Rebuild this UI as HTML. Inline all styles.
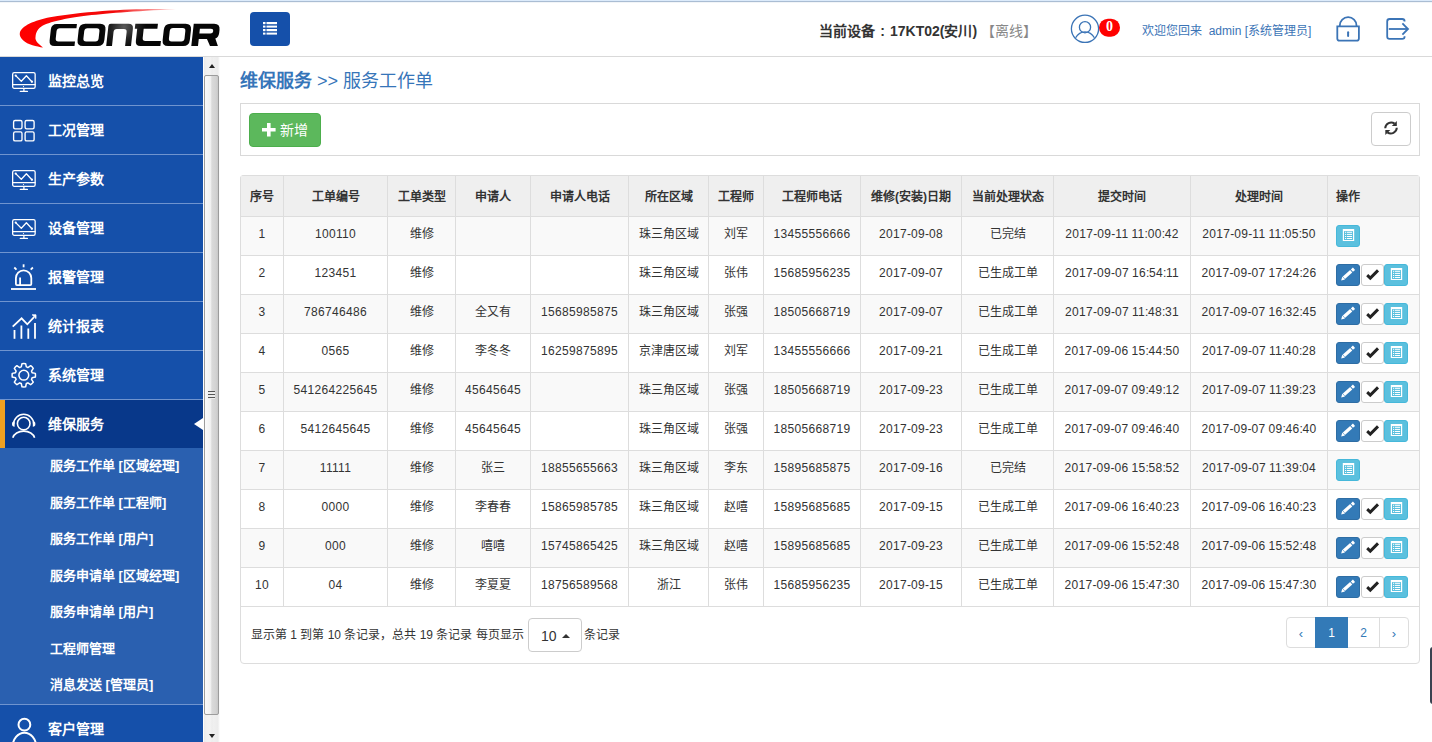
<!DOCTYPE html><html lang="zh-CN"><head><meta charset="utf-8"><style>
*{box-sizing:border-box;margin:0;padding:0}
html,body{width:1432px;height:742px;overflow:hidden;background:#fff;font-family:"Liberation Sans",sans-serif;color:#333}
.abs{position:absolute}
#topline{left:0;top:0;width:1432px;height:3px;background:linear-gradient(#dcebfb 0,#dcebfb 1px,#aabdd3 1px,#aabdd3 2px,#f2f5f8 2px,#f2f5f8 3px)}
#hdrline{left:0;top:56px;width:1432px;height:1px;background:#d9d9d9}
#toggle{left:250px;top:12px;width:40px;height:34px;border-radius:4px;background:#1550aa}
#side{left:0;top:57px;width:203px;height:685px;background:#1550aa;overflow:hidden}
.mi{position:absolute;left:0;width:203px;height:49px;border-bottom:1px solid #6f94cf;color:#fff;font-weight:bold;font-size:14px}
.mi .t{position:absolute;left:48px;top:14px;line-height:20px}
.mi .ic{position:absolute;left:11px;top:10px}
.act{background:#08388a;border-bottom:none;height:48px}
.bar{position:absolute;left:0;top:0;width:5px;height:48px;background:#f0a020}
.tri{position:absolute;right:0;top:18px;width:0;height:0;border-top:6px solid transparent;border-bottom:6px solid transparent;border-right:9px solid #fff}
#sub{position:absolute;left:0;top:391px;width:203px;height:256px;background:#2a60b0}
.si{position:absolute;left:50px;color:#fff;font-size:13px;font-weight:bold;line-height:18.57px}
#sb{left:203px;top:57px;width:17px;height:685px;background:linear-gradient(90deg,#fdfdfd 0,#fdfdfd 1px,#e9e9e9 1px,#f0f0f0 3px,#f2f2f2 8px,#ebebeb 9px,#f0f0f0 10px,#ececec 15px,#f7f7f7 16px,#fff 17px)}
#thumb{left:204px;top:75px;width:15px;height:640px;border:1px solid #9c9c9c;border-radius:2px;background:linear-gradient(90deg,#fafafa 0,#f0f0f0 45%,#dadada 52%,#d2d2d2 85%,#c8c8c8 100%)}
#title{left:240px;top:68px;font-size:18px;line-height:26px;color:#3675b9;white-space:nowrap}
#title b{font-weight:bold}
#toolbar{left:240px;top:103px;width:1180px;height:53px;border:1px solid #d9d9d9}
#addbtn{left:249px;top:113px;width:72px;height:34px;background:#5cb85c;border:1px solid #4cae4c;border-radius:4px;color:#fff;font-size:14px;line-height:32px}
#refbtn{left:1371px;top:112px;width:40px;height:34px;border:1px solid #ccc;border-radius:4px;background:#fff}
#tbox{left:240px;top:175px;width:1180px;height:489px;border:1px solid #ddd;border-radius:4px}
#tw{left:240px;top:175px;width:1180px;height:432px;border-radius:4px 4px 0 0;overflow:hidden}
table{border-collapse:collapse;table-layout:fixed;font-size:12px}
td{letter-spacing:0}
.d{letter-spacing:0.33px}
.c{letter-spacing:-0.33px}
th,td{border:1px solid #ddd;text-align:center;white-space:nowrap;overflow:hidden}
th{height:41px;background:#efefef;font-weight:bold;line-height:24px;padding:1px 0 0 0}
td{height:39px;padding:0 0 4px 0;line-height:17px}
tr.odd td{background:#f9f9f9}
.ops{text-align:left;padding-left:8px}
.bx{display:inline-block;vertical-align:middle;height:22px;border-radius:3px;position:relative;top:2px}
.bp{width:24px;background:#337ab7;border:1px solid #2e6da4}
.bc{width:23px;background:#fff;border:1px solid #ccc;margin-left:1px}
.bi{width:24px;background:#5bc0de;border:1px solid #46b8da;margin-left:0}
#pinfo{left:251px;top:627px;font-size:12px;line-height:17px;white-space:nowrap}
#psel{left:528px;top:618px;width:54px;height:34px;border:1px solid #ccc;border-radius:4px;background:#fff;font-size:14px}
#pag{left:1286px;top:617px;height:31px;display:flex;font-size:12px}
.pg{height:31px;border:1px solid #ddd;margin-left:-1px;color:#337ab7;text-align:center;line-height:31px}
#rtab{left:1430px;top:647px;width:4px;height:57px;background:#3a4250;border-radius:3px 0 0 3px}
</style></head><body>
<div id="topline" class="abs"></div>
<svg class="abs" style="left:0;top:0" width="230" height="56" viewBox="0 0 230 56">
<defs><linearGradient id="lg" gradientUnits="userSpaceOnUse" x1="20" y1="0" x2="178" y2="0"><stop offset="0" stop-color="#ff0000"/><stop offset="0.6" stop-color="#f20a0a"/><stop offset="1" stop-color="#ffe8e8"/></linearGradient>
<radialGradient id="kg" gradientUnits="userSpaceOnUse" cx="122" cy="27" r="22"><stop offset="0" stop-color="#5a5a5a"/><stop offset="0.6" stop-color="#202020"/><stop offset="1" stop-color="#060606"/></radialGradient></defs>
<path d="M176,9.2 C150,8.6 100,9 50,17.2 C35,20 21,26 19.8,32.9 C19,38 25,43 32.5,45.2 C36,46.3 40,47 43,47.5 C37,43 35,40 35.5,37.3 C35.8,31 39,27 45,24.5 C60,18.5 90,13 176,9.2 Z" fill="url(#lg)"/>
<g transform="matrix(1,0,-0.11,1,5.06,0)" fill="url(#kg)" fill-rule="evenodd">
<path d="M74.5,23.9 H54.5 Q49,23.9 49,29.4 V40.4 Q49,45.9 54.5,45.9 H74.5 V41.4 H57.9 Q54.9,41.4 54.9,38.4 V31.2 Q54.9,28.2 57.9,28.2 H74.5 Z"/>
<path d="M82.9,23.8 H97.7 Q103.7,23.8 103.7,29.8 V40 Q103.7,46 97.7,46 H82.9 Q76.9,46 76.9,40 V29.8 Q76.9,23.8 82.9,23.8 Z M85.6,28.2 H94.8 Q97.8,28.2 97.8,31.2 V38.6 Q97.8,41.6 94.8,41.6 H85.6 Q82.6,41.6 82.6,38.6 V31.2 Q82.6,28.2 85.6,28.2 Z"/>
<path d="M106.2,46 V26 Q106.2,23.8 108.4,23.8 H126 Q131,23.8 131,28.8 V46 H125.1 V32 Q125.1,29 122.1,29 H115 Q112,29 112,32 V46 Z"/>
<path d="M132.9,23.8 H155.5 V28.8 H141.8 V38 Q141.8,40.9 144.7,40.9 H160.4 V46 H140.3 Q135.3,46 135.3,41 V28.8 H132.9 Z"/>
<path d="M168,23.7 H183.2 Q189.2,23.7 189.2,29.7 V40.1 Q189.2,46.1 183.2,46.1 H168 Q162,46.1 162,40.1 V29.7 Q162,23.7 168,23.7 Z M171.1,28.1 H180.7 Q183.7,28.1 183.7,31.1 V38.5 Q183.7,41.5 180.7,41.5 H171.1 Q168.1,41.5 168.1,38.5 V31.1 Q168.1,28.1 171.1,28.1 Z"/>
<path d="M191.3,46 V23.8 H211.75 Q217.75,23.8 217.75,29.8 V33 Q217.75,37 214.5,38.6 L217.9,46 H210 L206.2,39 H198 V46 Z M198,28.7 H209 Q211.55,28.7 211.55,31.15 Q211.55,33.6 209,33.6 H198 Z"/>
</g></svg>
<div id="toggle" class="abs"><svg style="position:absolute;left:13px;top:10px" width="14" height="14" viewBox="0 0 14 14"><g fill="#fff"><rect x="0" y="0" width="2.5" height="2.2"/><rect x="3.5" y="0" width="10.5" height="2.2"/><rect x="0" y="3.6" width="2.5" height="2"/><rect x="3.5" y="3.6" width="10.5" height="2"/><rect x="0" y="7" width="2.5" height="2.2"/><rect x="3.5" y="7" width="10.5" height="2.2"/><rect x="0" y="10.6" width="2.5" height="2"/><rect x="3.5" y="10.6" width="10.5" height="2"/></g></svg></div>
<div class="abs" style="left:819px;top:21px;font-size:14px;line-height:20px;font-weight:bold;color:#333;white-space:nowrap">当前设备<span style="display:inline-block;width:15px;text-align:center">:</span>17KT02(安川) <span style="color:#888;font-weight:normal">【离线】</span></div>
<svg class="abs" style="left:1068px;top:12px" width="56" height="34" viewBox="0 0 56 34"><g fill="none" stroke="#3b74b6" stroke-width="1.3"><circle cx="17" cy="16.8" r="13.6"/><circle cx="17" cy="15.2" r="5.6"/><path d="M7.6,25.8 Q11,19.8 17,19.8 Q23,19.8 26.4,25.8"/></g>
<rect x="31" y="6.7" width="21" height="18" rx="9" fill="#f00"/></svg>
<div class="abs" style="left:1099px;top:18px;width:21px;text-align:center;font-family:'Liberation Serif',serif;font-weight:bold;font-size:14px;line-height:18px;color:#fff">0</div>
<div class="abs" style="left:1142px;top:21px;font-size:12px;line-height:20px;color:#3b74b6;white-space:nowrap">欢迎您回来&nbsp; admin [系统管理员]</div>
<svg class="abs" style="left:1334px;top:14px" width="28" height="30" viewBox="0 0 28 30"><g fill="none" stroke="#3b74b6" stroke-width="1.8"><path d="M5.8,12.2 V11.55 A8.35,8.35 0 0 1 22.5,11.55 V12.2"/><path d="M3.3,12.4 H24.9 V24.5 Q24.9,26.7 22.7,26.7 H5.5 Q3.3,26.7 3.3,24.5 Z"/><line x1="14.1" y1="18.3" x2="14.1" y2="22" stroke-width="2" stroke-linecap="round"/></g></svg>
<svg class="abs" style="left:1384px;top:16px" width="28" height="26" viewBox="0 0 28 26"><g fill="none" stroke="#3b74b6" stroke-width="1.8"><path d="M20.6,5.6 V5.4 Q20.6,3 18.2,3 H5.6 Q3.2,3 3.2,5.4 V20.5 Q3.2,22.9 5.6,22.9 H18.2 Q20.6,22.9 20.6,20.5 V20.3"/><line x1="4.8" y1="13" x2="23.6" y2="13"/><polyline points="18.4,7.4 24,13 18.4,18.6"/></g></svg>
<div id="hdrline" class="abs"></div>
<div id="side" class="abs">
<div class="mi" style="top:0px"><span class="ic"><svg width="26" height="26" viewBox="0 0 26 26"><g fill="none" stroke="#fff" stroke-width="1.3" stroke-linejoin="round" stroke-linecap="round"><rect x="1.65" y="5.65" width="22.5" height="15.7" rx="1.6"/><line x1="1.65" y1="17.6" x2="24.15" y2="17.6"/><line x1="12.9" y1="21.4" x2="12.9" y2="24.2"/><line x1="9.3" y1="24.4" x2="16.4" y2="24.4"/><polyline points="4.7,8.6 10.3,14.2 15.4,8.8 20.9,14.7"/></g><circle cx="4.7" cy="8.6" r="1.1" fill="#fff"/><circle cx="20.9" cy="14.7" r="1.1" fill="#fff"/><circle cx="12.5" cy="19.5" r="0.6" fill="#fff"/></svg></span><span class="t">监控总览</span></div>
<div class="mi" style="top:49px"><span class="ic"><svg width="26" height="28" viewBox="0 0 26 28"><g fill="none" stroke="#fff" stroke-width="1.35"><rect x="2.6" y="4.5" width="8.4" height="8.3" rx="1.5"/><rect x="14.1" y="4.5" width="9" height="8.3" rx="1.5"/><rect x="2.6" y="15.9" width="8.4" height="9" rx="1.5"/><rect x="14.1" y="15.9" width="9" height="9" rx="1.5"/></g></svg></span><span class="t">工况管理</span></div>
<div class="mi" style="top:98px"><span class="ic"><svg width="26" height="26" viewBox="0 0 26 26"><g fill="none" stroke="#fff" stroke-width="1.3" stroke-linejoin="round" stroke-linecap="round"><rect x="1.65" y="5.65" width="22.5" height="15.7" rx="1.6"/><line x1="1.65" y1="17.6" x2="24.15" y2="17.6"/><line x1="12.9" y1="21.4" x2="12.9" y2="24.2"/><line x1="9.3" y1="24.4" x2="16.4" y2="24.4"/><polyline points="4.7,8.6 10.3,14.2 15.4,8.8 20.9,14.7"/></g><circle cx="4.7" cy="8.6" r="1.1" fill="#fff"/><circle cx="20.9" cy="14.7" r="1.1" fill="#fff"/><circle cx="12.5" cy="19.5" r="0.6" fill="#fff"/></svg></span><span class="t">生产参数</span></div>
<div class="mi" style="top:147px"><span class="ic"><svg width="26" height="26" viewBox="0 0 26 26"><g fill="none" stroke="#fff" stroke-width="1.3" stroke-linejoin="round" stroke-linecap="round"><rect x="1.65" y="5.65" width="22.5" height="15.7" rx="1.6"/><line x1="1.65" y1="17.6" x2="24.15" y2="17.6"/><line x1="12.9" y1="21.4" x2="12.9" y2="24.2"/><line x1="9.3" y1="24.4" x2="16.4" y2="24.4"/><polyline points="4.7,8.6 10.3,14.2 15.4,8.8 20.9,14.7"/></g><circle cx="4.7" cy="8.6" r="1.1" fill="#fff"/><circle cx="20.9" cy="14.7" r="1.1" fill="#fff"/><circle cx="12.5" cy="19.5" r="0.6" fill="#fff"/></svg></span><span class="t">设备管理</span></div>
<div class="mi" style="top:196px"><span class="ic"><svg width="28" height="28" viewBox="0 0 28 28"><g fill="none" stroke="#fff" stroke-width="1.8" stroke-linecap="butt"><path d="M4.9,21 V15.1 A7.7,7.7 0 0 1 20.3,15.1 V21 Q20.3,22.1 19.2,22.1 H6 Q4.9,22.1 4.9,21 Z"/><path d="M9.1,22.1 V14.5"/><line x1="0" y1="26" x2="25" y2="26"/><line x1="12.6" y1="1.3" x2="12.6" y2="4.3"/><line x1="3.3" y1="4.5" x2="5.5" y2="6.6"/><line x1="21.9" y1="4.5" x2="19.7" y2="6.6"/></g></svg></span><span class="t">报警管理</span></div>
<div class="mi" style="top:245px"><span class="ic"><svg width="28" height="28" viewBox="0 0 28 28"><g fill="none" stroke="#fff" stroke-width="1.8"><line x1="3.5" y1="18" x2="3.5" y2="26.8"/><line x1="10.4" y1="13.5" x2="10.4" y2="26.8"/><line x1="17.3" y1="16.5" x2="17.3" y2="26.8"/><line x1="24" y1="11" x2="24" y2="26.8"/><polyline points="1.7,14.6 10.6,6.3 16.3,12.3 23,5.2" stroke-linejoin="miter"/></g><path d="M21.2,2.8 L25,2.8 L25,6.6 Z" fill="#fff" stroke="#fff" stroke-width="0.8"/></svg></span><span class="t">统计报表</span></div>
<div class="mi" style="top:294px"><span class="ic"><svg width="28" height="28" viewBox="0 0 28 28"><g fill="none" stroke="#fff" stroke-width="1.5" stroke-linejoin="round"><path d="M10.26,5.88 L10.97,2.64 A11.70,11.70 0 0 1 14.63,2.64 L15.34,5.88 A8.70,8.70 0 0 1 16.88,6.52 L19.68,4.73 A11.70,11.70 0 0 1 22.27,7.32 L20.48,10.12 A8.70,8.70 0 0 1 21.12,11.66 L24.36,12.37 A11.70,11.70 0 0 1 24.36,16.03 L21.12,16.74 A8.70,8.70 0 0 1 20.48,18.28 L22.27,21.08 A11.70,11.70 0 0 1 19.68,23.67 L16.88,21.88 A8.70,8.70 0 0 1 15.34,22.52 L14.63,25.76 A11.70,11.70 0 0 1 10.97,25.76 L10.26,22.52 A8.70,8.70 0 0 1 8.72,21.88 L5.92,23.67 A11.70,11.70 0 0 1 3.33,21.08 L5.12,18.28 A8.70,8.70 0 0 1 4.48,16.74 L1.24,16.03 A11.70,11.70 0 0 1 1.24,12.37 L4.48,11.66 A8.70,8.70 0 0 1 5.12,10.12 L3.33,7.32 A11.70,11.70 0 0 1 5.92,4.73 L8.72,6.52 A8.70,8.70 0 0 1 10.26,5.88 Z"/><circle cx="12.8" cy="14.2" r="4.9"/></g></svg></span><span class="t">系统管理</span></div>
<div class="mi act" style="top:343px"><div class="bar"></div><span class="ic" style="top:12px"><svg width="28" height="28" viewBox="0 0 28 28"><g fill="none" stroke="#fff" stroke-width="1.6"><circle cx="12.7" cy="11.6" r="6.3"/><path d="M2.6,12.2 A10.1,9.9 0 0 1 22.8,12.2"/><path d="M1.8,25.8 A11.1,8.2 0 0 1 23.6,25.8"/></g><path d="M1,12 Q1,9.2 3.6,9.3 L3.6,14.8 Q1,14.8 1,12Z" fill="#fff"/><path d="M24.4,12 Q24.4,9.2 21.8,9.3 L21.8,14.8 Q24.4,14.8 24.4,12Z" fill="#fff"/></svg></span><span class="t">维保服务</span><div class="tri"></div></div>
<div id="sub">
<div class="si" style="top:9.00px">服务工作单 [区域经理]</div>
<div class="si" style="top:45.57px">服务工作单 [工程师]</div>
<div class="si" style="top:82.14px">服务工作单 [用户]</div>
<div class="si" style="top:118.71px">服务申请单 [区域经理]</div>
<div class="si" style="top:155.28px">服务申请单 [用户]</div>
<div class="si" style="top:191.85px">工程师管理</div>
<div class="si" style="top:228.42px">消息发送 [管理员]</div>
</div>
<div class="mi" style="top:647px;border-top:1px solid #6f94cf;border-bottom:none"><span class="ic" style="top:10px"><svg width="28" height="30" viewBox="0 0 28 30"><g fill="none" stroke="#fff" stroke-width="2"><circle cx="13.4" cy="9.7" r="5.9"/><path d="M1.6,32 A11.8,14.3 0 0 1 25.2,32"/></g></svg></span><span class="t" style="top:14px">客户管理</span></div>
</div>
<div id="sb" class="abs"></div>
<div class="abs" style="left:209px;top:64px;width:0;height:0;border-left:3.5px solid transparent;border-right:3.5px solid transparent;border-bottom:4px solid #222"></div>
<div id="thumb" class="abs"></div>
<div class="abs" style="left:209px;top:734px;width:0;height:0;border-left:3.5px solid transparent;border-right:3.5px solid transparent;border-top:4px solid #222"></div>
<div class="abs" style="left:208px;top:391px;width:7px;height:8px;background:repeating-linear-gradient(#555 0,#555 1px,#ececec 1px,#ececec 3px)"></div>
<div id="title" class="abs"><b>维保服务</b> &gt;&gt; 服务工作单</div>
<div id="toolbar" class="abs"></div>
<div id="addbtn" class="abs"><svg style="position:absolute;left:12px;top:9px" width="15" height="15" viewBox="0 0 15 15"><path d="M5,0 H8.6 V5 H13.6 V8.6 H8.6 V13.6 H5 V8.6 H0 V5 H5 Z" fill="#fff"/></svg><span style="position:absolute;left:30px;top:0">新增</span></div>
<div id="refbtn" class="abs"><svg style="position:absolute;left:0;top:0" width="38" height="32" viewBox="0 0 38 32"><g transform="translate(12,8)"><g fill="none" stroke="#333" stroke-width="2"><path d="M1.2,7.2 A6,6 0 0 1 10.6,2.6"/><path d="M12.8,6.8 A6,6 0 0 1 3.4,11.4"/></g><path d="M7.8,5.1 H12.8 V0.1 Z" fill="#333"/><path d="M1.3,8.9 H6.3 L1.3,13.9 Z" fill="#333"/></g></svg></div>
<div id="tbox" class="abs"></div>
<div id="tw" class="abs"><table><colgroup><col style="width:43px"><col style="width:104px"><col style="width:68px"><col style="width:75px"><col style="width:98px"><col style="width:80px"><col style="width:55px"><col style="width:97px"><col style="width:101px"><col style="width:92px"><col style="width:137px"><col style="width:137px"><col style="width:92px"></colgroup>
<tr><th>序号</th><th>工单编号</th><th>工单类型</th><th>申请人</th><th>申请人电话</th><th>所在区域</th><th>工程师</th><th>工程师电话</th><th>维修(安装)日期</th><th>当前处理状态</th><th>提交时间</th><th>处理时间</th><th class="ops">操作</th></tr>
<tr class="odd"><td><span class="d">1</span></td><td><span class="d">100110</span></td><td>维修</td><td></td><td></td><td>珠三角区域</td><td>刘军</td><td><span class="d">13455556666</span></td><td><span class="d">2017</span>-<span class="d">09</span>-<span class="d">08</span></td><td>已完结</td><td><span class="d">2017</span>-<span class="d">09</span>-<span class="d">11</span><span class="c"> </span><span class="d">11</span><span class="c">:</span><span class="d">00</span><span class="c">:</span><span class="d">42</span></td><td><span class="d">2017</span>-<span class="d">09</span>-<span class="d">11</span><span class="c"> </span><span class="d">11</span><span class="c">:</span><span class="d">05</span><span class="c">:</span><span class="d">50</span></td><td class="ops"><span class="bx bi"><svg style="position:absolute;left:0;top:0" width="22" height="20" viewBox="0 0 22 20"><rect x="5.8" y="3" width="11.4" height="12" fill="#fff"/><rect x="7" y="5.1" width="9" height="8.9" fill="#5bc0de"/><g fill="#fff"><rect x="8" y="5.8" width="1.2" height="1"/><rect x="10" y="5.8" width="5.1" height="1"/><rect x="8" y="7.9" width="1.2" height="1"/><rect x="10" y="7.9" width="5.1" height="1"/><rect x="8" y="10" width="1.2" height="1"/><rect x="10" y="10" width="5.1" height="1"/><rect x="8" y="12" width="1.2" height="1"/><rect x="10" y="12" width="5.1" height="1"/></g></svg></span></td></tr>
<tr><td><span class="d">2</span></td><td><span class="d">123451</span></td><td>维修</td><td></td><td></td><td>珠三角区域</td><td>张伟</td><td><span class="d">15685956235</span></td><td><span class="d">2017</span>-<span class="d">09</span>-<span class="d">07</span></td><td>已生成工单</td><td><span class="d">2017</span>-<span class="d">09</span>-<span class="d">07</span><span class="c"> </span><span class="d">16</span><span class="c">:</span><span class="d">54</span><span class="c">:</span><span class="d">11</span></td><td><span class="d">2017</span>-<span class="d">09</span>-<span class="d">07</span><span class="c"> </span><span class="d">17</span><span class="c">:</span><span class="d">24</span><span class="c">:</span><span class="d">26</span></td><td class="ops"><span class="bx bp"><svg style="position:absolute;left:0;top:0" width="22" height="20" viewBox="0 0 22 20"><g stroke="#fff" stroke-width="3.2" fill="none"><line x1="6.9" y1="12.7" x2="14.2" y2="6.2"/><line x1="14.9" y1="5.6" x2="17" y2="3.7"/></g><path d="M5.3,11.4 L8,14.4 L4.2,15.4 Z" fill="#fff"/></svg></span><span class="bx bc"><svg style="position:absolute;left:0;top:0" width="21" height="20" viewBox="0 0 21 20"><polyline points="5.2,10.1 8.3,13.1 16,5.4" fill="none" stroke="#222" stroke-width="2.9" stroke-linejoin="miter"/></svg></span><span class="bx bi"><svg style="position:absolute;left:0;top:0" width="22" height="20" viewBox="0 0 22 20"><rect x="5.8" y="3" width="11.4" height="12" fill="#fff"/><rect x="7" y="5.1" width="9" height="8.9" fill="#5bc0de"/><g fill="#fff"><rect x="8" y="5.8" width="1.2" height="1"/><rect x="10" y="5.8" width="5.1" height="1"/><rect x="8" y="7.9" width="1.2" height="1"/><rect x="10" y="7.9" width="5.1" height="1"/><rect x="8" y="10" width="1.2" height="1"/><rect x="10" y="10" width="5.1" height="1"/><rect x="8" y="12" width="1.2" height="1"/><rect x="10" y="12" width="5.1" height="1"/></g></svg></span></td></tr>
<tr class="odd"><td><span class="d">3</span></td><td><span class="d">786746486</span></td><td>维修</td><td>全又有</td><td><span class="d">15685985875</span></td><td>珠三角区域</td><td>张强</td><td><span class="d">18505668719</span></td><td><span class="d">2017</span>-<span class="d">09</span>-<span class="d">07</span></td><td>已生成工单</td><td><span class="d">2017</span>-<span class="d">09</span>-<span class="d">07</span><span class="c"> </span><span class="d">11</span><span class="c">:</span><span class="d">48</span><span class="c">:</span><span class="d">31</span></td><td><span class="d">2017</span>-<span class="d">09</span>-<span class="d">07</span><span class="c"> </span><span class="d">16</span><span class="c">:</span><span class="d">32</span><span class="c">:</span><span class="d">45</span></td><td class="ops"><span class="bx bp"><svg style="position:absolute;left:0;top:0" width="22" height="20" viewBox="0 0 22 20"><g stroke="#fff" stroke-width="3.2" fill="none"><line x1="6.9" y1="12.7" x2="14.2" y2="6.2"/><line x1="14.9" y1="5.6" x2="17" y2="3.7"/></g><path d="M5.3,11.4 L8,14.4 L4.2,15.4 Z" fill="#fff"/></svg></span><span class="bx bc"><svg style="position:absolute;left:0;top:0" width="21" height="20" viewBox="0 0 21 20"><polyline points="5.2,10.1 8.3,13.1 16,5.4" fill="none" stroke="#222" stroke-width="2.9" stroke-linejoin="miter"/></svg></span><span class="bx bi"><svg style="position:absolute;left:0;top:0" width="22" height="20" viewBox="0 0 22 20"><rect x="5.8" y="3" width="11.4" height="12" fill="#fff"/><rect x="7" y="5.1" width="9" height="8.9" fill="#5bc0de"/><g fill="#fff"><rect x="8" y="5.8" width="1.2" height="1"/><rect x="10" y="5.8" width="5.1" height="1"/><rect x="8" y="7.9" width="1.2" height="1"/><rect x="10" y="7.9" width="5.1" height="1"/><rect x="8" y="10" width="1.2" height="1"/><rect x="10" y="10" width="5.1" height="1"/><rect x="8" y="12" width="1.2" height="1"/><rect x="10" y="12" width="5.1" height="1"/></g></svg></span></td></tr>
<tr><td><span class="d">4</span></td><td><span class="d">0565</span></td><td>维修</td><td>李冬冬</td><td><span class="d">16259875895</span></td><td>京津唐区域</td><td>刘军</td><td><span class="d">13455556666</span></td><td><span class="d">2017</span>-<span class="d">09</span>-<span class="d">21</span></td><td>已生成工单</td><td><span class="d">2017</span>-<span class="d">09</span>-<span class="d">06</span><span class="c"> </span><span class="d">15</span><span class="c">:</span><span class="d">44</span><span class="c">:</span><span class="d">50</span></td><td><span class="d">2017</span>-<span class="d">09</span>-<span class="d">07</span><span class="c"> </span><span class="d">11</span><span class="c">:</span><span class="d">40</span><span class="c">:</span><span class="d">28</span></td><td class="ops"><span class="bx bp"><svg style="position:absolute;left:0;top:0" width="22" height="20" viewBox="0 0 22 20"><g stroke="#fff" stroke-width="3.2" fill="none"><line x1="6.9" y1="12.7" x2="14.2" y2="6.2"/><line x1="14.9" y1="5.6" x2="17" y2="3.7"/></g><path d="M5.3,11.4 L8,14.4 L4.2,15.4 Z" fill="#fff"/></svg></span><span class="bx bc"><svg style="position:absolute;left:0;top:0" width="21" height="20" viewBox="0 0 21 20"><polyline points="5.2,10.1 8.3,13.1 16,5.4" fill="none" stroke="#222" stroke-width="2.9" stroke-linejoin="miter"/></svg></span><span class="bx bi"><svg style="position:absolute;left:0;top:0" width="22" height="20" viewBox="0 0 22 20"><rect x="5.8" y="3" width="11.4" height="12" fill="#fff"/><rect x="7" y="5.1" width="9" height="8.9" fill="#5bc0de"/><g fill="#fff"><rect x="8" y="5.8" width="1.2" height="1"/><rect x="10" y="5.8" width="5.1" height="1"/><rect x="8" y="7.9" width="1.2" height="1"/><rect x="10" y="7.9" width="5.1" height="1"/><rect x="8" y="10" width="1.2" height="1"/><rect x="10" y="10" width="5.1" height="1"/><rect x="8" y="12" width="1.2" height="1"/><rect x="10" y="12" width="5.1" height="1"/></g></svg></span></td></tr>
<tr class="odd"><td><span class="d">5</span></td><td><span class="d">541264225645</span></td><td>维修</td><td><span class="d">45645645</span></td><td></td><td>珠三角区域</td><td>张强</td><td><span class="d">18505668719</span></td><td><span class="d">2017</span>-<span class="d">09</span>-<span class="d">23</span></td><td>已生成工单</td><td><span class="d">2017</span>-<span class="d">09</span>-<span class="d">07</span><span class="c"> </span><span class="d">09</span><span class="c">:</span><span class="d">49</span><span class="c">:</span><span class="d">12</span></td><td><span class="d">2017</span>-<span class="d">09</span>-<span class="d">07</span><span class="c"> </span><span class="d">11</span><span class="c">:</span><span class="d">39</span><span class="c">:</span><span class="d">23</span></td><td class="ops"><span class="bx bp"><svg style="position:absolute;left:0;top:0" width="22" height="20" viewBox="0 0 22 20"><g stroke="#fff" stroke-width="3.2" fill="none"><line x1="6.9" y1="12.7" x2="14.2" y2="6.2"/><line x1="14.9" y1="5.6" x2="17" y2="3.7"/></g><path d="M5.3,11.4 L8,14.4 L4.2,15.4 Z" fill="#fff"/></svg></span><span class="bx bc"><svg style="position:absolute;left:0;top:0" width="21" height="20" viewBox="0 0 21 20"><polyline points="5.2,10.1 8.3,13.1 16,5.4" fill="none" stroke="#222" stroke-width="2.9" stroke-linejoin="miter"/></svg></span><span class="bx bi"><svg style="position:absolute;left:0;top:0" width="22" height="20" viewBox="0 0 22 20"><rect x="5.8" y="3" width="11.4" height="12" fill="#fff"/><rect x="7" y="5.1" width="9" height="8.9" fill="#5bc0de"/><g fill="#fff"><rect x="8" y="5.8" width="1.2" height="1"/><rect x="10" y="5.8" width="5.1" height="1"/><rect x="8" y="7.9" width="1.2" height="1"/><rect x="10" y="7.9" width="5.1" height="1"/><rect x="8" y="10" width="1.2" height="1"/><rect x="10" y="10" width="5.1" height="1"/><rect x="8" y="12" width="1.2" height="1"/><rect x="10" y="12" width="5.1" height="1"/></g></svg></span></td></tr>
<tr><td><span class="d">6</span></td><td><span class="d">5412645645</span></td><td>维修</td><td><span class="d">45645645</span></td><td></td><td>珠三角区域</td><td>张强</td><td><span class="d">18505668719</span></td><td><span class="d">2017</span>-<span class="d">09</span>-<span class="d">23</span></td><td>已生成工单</td><td><span class="d">2017</span>-<span class="d">09</span>-<span class="d">07</span><span class="c"> </span><span class="d">09</span><span class="c">:</span><span class="d">46</span><span class="c">:</span><span class="d">40</span></td><td><span class="d">2017</span>-<span class="d">09</span>-<span class="d">07</span><span class="c"> </span><span class="d">09</span><span class="c">:</span><span class="d">46</span><span class="c">:</span><span class="d">40</span></td><td class="ops"><span class="bx bp"><svg style="position:absolute;left:0;top:0" width="22" height="20" viewBox="0 0 22 20"><g stroke="#fff" stroke-width="3.2" fill="none"><line x1="6.9" y1="12.7" x2="14.2" y2="6.2"/><line x1="14.9" y1="5.6" x2="17" y2="3.7"/></g><path d="M5.3,11.4 L8,14.4 L4.2,15.4 Z" fill="#fff"/></svg></span><span class="bx bc"><svg style="position:absolute;left:0;top:0" width="21" height="20" viewBox="0 0 21 20"><polyline points="5.2,10.1 8.3,13.1 16,5.4" fill="none" stroke="#222" stroke-width="2.9" stroke-linejoin="miter"/></svg></span><span class="bx bi"><svg style="position:absolute;left:0;top:0" width="22" height="20" viewBox="0 0 22 20"><rect x="5.8" y="3" width="11.4" height="12" fill="#fff"/><rect x="7" y="5.1" width="9" height="8.9" fill="#5bc0de"/><g fill="#fff"><rect x="8" y="5.8" width="1.2" height="1"/><rect x="10" y="5.8" width="5.1" height="1"/><rect x="8" y="7.9" width="1.2" height="1"/><rect x="10" y="7.9" width="5.1" height="1"/><rect x="8" y="10" width="1.2" height="1"/><rect x="10" y="10" width="5.1" height="1"/><rect x="8" y="12" width="1.2" height="1"/><rect x="10" y="12" width="5.1" height="1"/></g></svg></span></td></tr>
<tr class="odd"><td><span class="d">7</span></td><td><span class="d">11111</span></td><td>维修</td><td>张三</td><td><span class="d">18855655663</span></td><td>珠三角区域</td><td>李东</td><td><span class="d">15895685875</span></td><td><span class="d">2017</span>-<span class="d">09</span>-<span class="d">16</span></td><td>已完结</td><td><span class="d">2017</span>-<span class="d">09</span>-<span class="d">06</span><span class="c"> </span><span class="d">15</span><span class="c">:</span><span class="d">58</span><span class="c">:</span><span class="d">52</span></td><td><span class="d">2017</span>-<span class="d">09</span>-<span class="d">07</span><span class="c"> </span><span class="d">11</span><span class="c">:</span><span class="d">39</span><span class="c">:</span><span class="d">04</span></td><td class="ops"><span class="bx bi"><svg style="position:absolute;left:0;top:0" width="22" height="20" viewBox="0 0 22 20"><rect x="5.8" y="3" width="11.4" height="12" fill="#fff"/><rect x="7" y="5.1" width="9" height="8.9" fill="#5bc0de"/><g fill="#fff"><rect x="8" y="5.8" width="1.2" height="1"/><rect x="10" y="5.8" width="5.1" height="1"/><rect x="8" y="7.9" width="1.2" height="1"/><rect x="10" y="7.9" width="5.1" height="1"/><rect x="8" y="10" width="1.2" height="1"/><rect x="10" y="10" width="5.1" height="1"/><rect x="8" y="12" width="1.2" height="1"/><rect x="10" y="12" width="5.1" height="1"/></g></svg></span></td></tr>
<tr><td><span class="d">8</span></td><td><span class="d">0000</span></td><td>维修</td><td>李春春</td><td><span class="d">15865985785</span></td><td>珠三角区域</td><td>赵嘻</td><td><span class="d">15895685685</span></td><td><span class="d">2017</span>-<span class="d">09</span>-<span class="d">15</span></td><td>已生成工单</td><td><span class="d">2017</span>-<span class="d">09</span>-<span class="d">06</span><span class="c"> </span><span class="d">16</span><span class="c">:</span><span class="d">40</span><span class="c">:</span><span class="d">23</span></td><td><span class="d">2017</span>-<span class="d">09</span>-<span class="d">06</span><span class="c"> </span><span class="d">16</span><span class="c">:</span><span class="d">40</span><span class="c">:</span><span class="d">23</span></td><td class="ops"><span class="bx bp"><svg style="position:absolute;left:0;top:0" width="22" height="20" viewBox="0 0 22 20"><g stroke="#fff" stroke-width="3.2" fill="none"><line x1="6.9" y1="12.7" x2="14.2" y2="6.2"/><line x1="14.9" y1="5.6" x2="17" y2="3.7"/></g><path d="M5.3,11.4 L8,14.4 L4.2,15.4 Z" fill="#fff"/></svg></span><span class="bx bc"><svg style="position:absolute;left:0;top:0" width="21" height="20" viewBox="0 0 21 20"><polyline points="5.2,10.1 8.3,13.1 16,5.4" fill="none" stroke="#222" stroke-width="2.9" stroke-linejoin="miter"/></svg></span><span class="bx bi"><svg style="position:absolute;left:0;top:0" width="22" height="20" viewBox="0 0 22 20"><rect x="5.8" y="3" width="11.4" height="12" fill="#fff"/><rect x="7" y="5.1" width="9" height="8.9" fill="#5bc0de"/><g fill="#fff"><rect x="8" y="5.8" width="1.2" height="1"/><rect x="10" y="5.8" width="5.1" height="1"/><rect x="8" y="7.9" width="1.2" height="1"/><rect x="10" y="7.9" width="5.1" height="1"/><rect x="8" y="10" width="1.2" height="1"/><rect x="10" y="10" width="5.1" height="1"/><rect x="8" y="12" width="1.2" height="1"/><rect x="10" y="12" width="5.1" height="1"/></g></svg></span></td></tr>
<tr class="odd"><td><span class="d">9</span></td><td><span class="d">000</span></td><td>维修</td><td>嘻嘻</td><td><span class="d">15745865425</span></td><td>珠三角区域</td><td>赵嘻</td><td><span class="d">15895685685</span></td><td><span class="d">2017</span>-<span class="d">09</span>-<span class="d">23</span></td><td>已生成工单</td><td><span class="d">2017</span>-<span class="d">09</span>-<span class="d">06</span><span class="c"> </span><span class="d">15</span><span class="c">:</span><span class="d">52</span><span class="c">:</span><span class="d">48</span></td><td><span class="d">2017</span>-<span class="d">09</span>-<span class="d">06</span><span class="c"> </span><span class="d">15</span><span class="c">:</span><span class="d">52</span><span class="c">:</span><span class="d">48</span></td><td class="ops"><span class="bx bp"><svg style="position:absolute;left:0;top:0" width="22" height="20" viewBox="0 0 22 20"><g stroke="#fff" stroke-width="3.2" fill="none"><line x1="6.9" y1="12.7" x2="14.2" y2="6.2"/><line x1="14.9" y1="5.6" x2="17" y2="3.7"/></g><path d="M5.3,11.4 L8,14.4 L4.2,15.4 Z" fill="#fff"/></svg></span><span class="bx bc"><svg style="position:absolute;left:0;top:0" width="21" height="20" viewBox="0 0 21 20"><polyline points="5.2,10.1 8.3,13.1 16,5.4" fill="none" stroke="#222" stroke-width="2.9" stroke-linejoin="miter"/></svg></span><span class="bx bi"><svg style="position:absolute;left:0;top:0" width="22" height="20" viewBox="0 0 22 20"><rect x="5.8" y="3" width="11.4" height="12" fill="#fff"/><rect x="7" y="5.1" width="9" height="8.9" fill="#5bc0de"/><g fill="#fff"><rect x="8" y="5.8" width="1.2" height="1"/><rect x="10" y="5.8" width="5.1" height="1"/><rect x="8" y="7.9" width="1.2" height="1"/><rect x="10" y="7.9" width="5.1" height="1"/><rect x="8" y="10" width="1.2" height="1"/><rect x="10" y="10" width="5.1" height="1"/><rect x="8" y="12" width="1.2" height="1"/><rect x="10" y="12" width="5.1" height="1"/></g></svg></span></td></tr>
<tr><td><span class="d">10</span></td><td><span class="d">04</span></td><td>维修</td><td>李夏夏</td><td><span class="d">18756589568</span></td><td>浙江</td><td>张伟</td><td><span class="d">15685956235</span></td><td><span class="d">2017</span>-<span class="d">09</span>-<span class="d">15</span></td><td>已生成工单</td><td><span class="d">2017</span>-<span class="d">09</span>-<span class="d">06</span><span class="c"> </span><span class="d">15</span><span class="c">:</span><span class="d">47</span><span class="c">:</span><span class="d">30</span></td><td><span class="d">2017</span>-<span class="d">09</span>-<span class="d">06</span><span class="c"> </span><span class="d">15</span><span class="c">:</span><span class="d">47</span><span class="c">:</span><span class="d">30</span></td><td class="ops"><span class="bx bp"><svg style="position:absolute;left:0;top:0" width="22" height="20" viewBox="0 0 22 20"><g stroke="#fff" stroke-width="3.2" fill="none"><line x1="6.9" y1="12.7" x2="14.2" y2="6.2"/><line x1="14.9" y1="5.6" x2="17" y2="3.7"/></g><path d="M5.3,11.4 L8,14.4 L4.2,15.4 Z" fill="#fff"/></svg></span><span class="bx bc"><svg style="position:absolute;left:0;top:0" width="21" height="20" viewBox="0 0 21 20"><polyline points="5.2,10.1 8.3,13.1 16,5.4" fill="none" stroke="#222" stroke-width="2.9" stroke-linejoin="miter"/></svg></span><span class="bx bi"><svg style="position:absolute;left:0;top:0" width="22" height="20" viewBox="0 0 22 20"><rect x="5.8" y="3" width="11.4" height="12" fill="#fff"/><rect x="7" y="5.1" width="9" height="8.9" fill="#5bc0de"/><g fill="#fff"><rect x="8" y="5.8" width="1.2" height="1"/><rect x="10" y="5.8" width="5.1" height="1"/><rect x="8" y="7.9" width="1.2" height="1"/><rect x="10" y="7.9" width="5.1" height="1"/><rect x="8" y="10" width="1.2" height="1"/><rect x="10" y="10" width="5.1" height="1"/><rect x="8" y="12" width="1.2" height="1"/><rect x="10" y="12" width="5.1" height="1"/></g></svg></span></td></tr>
</table></div>
<div id="pinfo" class="abs">显示第 1 到第 10 条记录，总共 19 条记录 每页显示</div>
<div id="psel" class="abs"><span style="position:absolute;left:12px;top:8px;line-height:18px">10</span><div style="position:absolute;left:33px;top:15px;width:0;height:0;border-left:4px solid transparent;border-right:4px solid transparent;border-bottom:4px solid #333"></div></div>
<div class="abs" style="left:584px;top:627px;font-size:12px;line-height:17px">条记录</div>
<div id="pag" class="abs"><div class="pg" style="width:30px;margin-left:0;border-radius:4px 0 0 4px;font-size:13px;line-height:31px">‹</div><div class="pg" style="width:33px;background:#337ab7;border-color:#337ab7;color:#fff;position:relative">1</div><div class="pg" style="width:33px">2</div><div class="pg" style="width:30px;border-radius:0 4px 4px 0;font-size:13px;line-height:31px">›</div></div>
<div id="rtab" class="abs"></div>
</body></html>
